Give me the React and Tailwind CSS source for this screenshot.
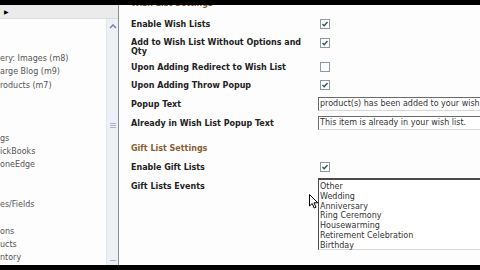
import React from 'react';

const font = { fontFamily: '"DejaVu Sans", Verdana, sans-serif' };

const Check = ({ on }) => (
  <div className="w-[10px] h-[10px] border border-[#8a9aa8] bg-white flex items-center justify-center">
    {on && (
      <svg width="8" height="8" viewBox="0 0 8 8">
        <path d="M1.5 4 L3.2 5.8 L6.5 2" fill="none" stroke="#2f5a3c" strokeWidth="1.4" />
      </svg>
    )}
  </div>
);

const Row = ({ label, className, children, start, labelClass = '' }) => (
  <div className={`flex ${start ? 'items-start' : 'items-center'} ${className}`}>
    <div className={`w-[187px] shrink-0 font-bold text-[8px] leading-[9px] text-[#222] pr-2 ${labelClass}`}>{label}</div>
    <div className="flex-1 min-w-0">{children}</div>
  </div>
);

const sideItems = [
  'ery: Images (m8)', 'arge Blog (m9)', 'roducts (m7)', '', '', '', 'gs', 'ickBooks', 'oneEdge',
  '', '', 'es/Fields', '', 'ons', 'ucts', 'ntory',
];

const events = ['Other', 'Wedding', 'Anniversary', 'Ring Ceremony', 'Housewarming', 'Retirement Celebration', 'Birthday'];

export default function App() {
  return (
    <div className="w-[480px] h-[270px] flex flex-col bg-black overflow-hidden" style={font}>
      <div className="h-[5px] bg-black" />
      <div className="h-[260px] flex bg-[#fdfdfd]">
        {/* sidebar */}
        <div className="w-[119px] shrink-0 flex flex-col border-r border-[#8c8c8c]">
          <div className="h-[14px] bg-[#ebebeb] border-b border-[#dcdcdc] flex items-center pl-[4px]">
            <span className="text-[6px] text-black leading-none">▶</span>
          </div>
          <div className="flex-1 flex min-h-0">
            <div className="flex-1 overflow-hidden pt-[33px] text-[8px] leading-[13.3px] text-[#555] whitespace-nowrap">
              {sideItems.map((t, i) => (
                <div key={i} className="h-[13.3px]">{t}</div>
              ))}
            </div>
            <div className="w-[12px] bg-[#edf1f6] border-l border-[#e2e6ec] flex flex-col items-center justify-between py-[4px]">
              <svg width="8" height="6" viewBox="0 0 8 6">
                <path d="M1 5 L4 2 L7 5" fill="none" stroke="#6d7f99" strokeWidth="1.4" />
              </svg>
              <div className="flex flex-col gap-[1px] mb-[38px]">
                <div className="w-[6px] h-[1px] bg-[#a9b4c4]" />
                <div className="w-[6px] h-[1px] bg-[#a9b4c4]" />
                <div className="w-[6px] h-[1px] bg-[#a9b4c4]" />
              </div>
              <div className="w-[6px] h-[1px] bg-[#a9b4c4]" />
            </div>
          </div>
        </div>

        {/* content */}
        <div className="flex-1 relative overflow-hidden pl-[12px]">
          <div className="h-[10px] mt-[-6px] text-[8px] font-bold text-[#8a5d34] flex items-center">Wish List Settings</div>
          <Row label="Enable Wish Lists" className="h-[18px] mt-[6px]"><div className="ml-[2px]"><Check on /></div></Row>
          <Row label="Add to Wish List Without Options and Qty" className="h-[21px] mt-[3px]" labelClass="pt-[2px]" start>
            <div className="ml-[2px] mt-[2px]"><Check on /></div>
          </Row>
          <Row label="Upon Adding Redirect to Wish List" className="h-[14px] mt-[3px]"><div className="ml-[2px]"><Check /></div></Row>
          <Row label="Upon Adding Throw Popup" className="h-[14px] mt-[4px]"><div className="ml-[2px]"><Check on /></div></Row>
          <Row label="Popup Text" className="h-[14px] mt-[5px]">
            <div className="h-[14px] w-[200px] border-l border-t border-[#6a6a6a] border-b border-b-[#d8d8d8] bg-white text-[8px] leading-[12px] text-[#333] pl-[1px] whitespace-nowrap overflow-hidden">
              product(s) has been added to your wish list.
            </div>
          </Row>
          <Row label="Already in Wish List Popup Text" className="h-[14px] mt-[5px]">
            <div className="h-[14px] w-[200px] border-l border-t border-[#6a6a6a] border-b border-b-[#d8d8d8] bg-white text-[8px] leading-[12px] text-[#333] pl-[1px] whitespace-nowrap overflow-hidden">
              This item is already in your wish list.
            </div>
          </Row>
          <div className="h-[14px] mt-[12px] text-[8px] font-bold text-[#8a5d34] flex items-center">Gift List Settings</div>
          <Row label="Enable Gift Lists" className="h-[14px] mt-[4px]"><div className="ml-[2px]"><Check on /></div></Row>
          <Row label="Gift Lists Events" className="mt-[4px]" labelClass="pt-[4px]" start>
            <div className="h-[72px] w-[200px] border-l border-t-2 border-[#4a4a4a] border-b border-b-[#d8d8d8] bg-white pt-[2px] pl-[1px] text-[8px] leading-[9.8px] text-[#333] whitespace-nowrap">
              {events.map((e) => (
                <div key={e}>{e}</div>
              ))}
            </div>
          </Row>
          <svg className="absolute left-[190px] top-[189px]" width="10" height="15" viewBox="0 0 10 15">
            <path d="M0.5 0.5 L0.5 12 L3.2 9.5 L5.2 14 L7 13.2 L5 8.8 L8.8 8.8 Z" fill="#fff" stroke="#000" strokeWidth="1" />
          </svg>
        </div>
      </div>
      <div className="h-[5px] bg-black" />
    </div>
  );
}
